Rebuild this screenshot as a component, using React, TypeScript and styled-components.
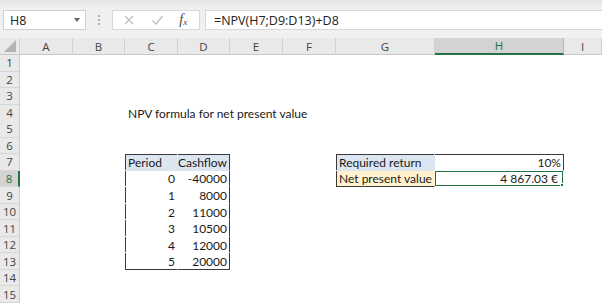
import React from 'react';
import styled, { createGlobalStyle, css } from 'styled-components';

const GlobalStyle = createGlobalStyle`
  html, body {
    margin: 0;
    padding: 0;
    background: #ffffff;
    overflow: hidden;
  }
`;

const COLS = ['A', 'B', 'C', 'D', 'E', 'F', 'G', 'H', 'I'];
const TEMPLATE = '20px 53px 52px 53px 52px 53px 53px 99px 129px 1fr';
const ROW_H = '16.54px';

type CellDef = {
  text?: string;
  align?: 'left' | 'right';
  bg?: string;
  top?: boolean;
  left?: boolean;
  right?: boolean;
  bottom?: boolean;
  selected?: boolean;
};

const cells: Record<string, CellDef> = {
  C4: { text: 'NPV formula for net present value' },
  C7: { text: 'Period', bg: '#dce6f1', top: true, left: true },
  D7: { text: 'Cashflow', align: 'right', bg: '#dce6f1', top: true, right: true },
  G7: { text: 'Required return', bg: '#dce6f1', top: true, left: true },
  H7: { text: '10%', align: 'right', top: true, right: true },
  G8: { text: 'Net present value', bg: '#fff2cc', bottom: true, left: true },
  H8: { text: '4 867.03 € ', align: 'right', selected: true },
};

const cashflow = [
  ['0', '-40000'],
  ['1', '8000'],
  ['2', '11000'],
  ['3', '10500'],
  ['4', '12000'],
  ['5', '20000'],
];
cashflow.forEach(([p, c], i) => {
  const r = 8 + i;
  const last = i === cashflow.length - 1;
  cells[`C${r}`] = { text: p, align: 'right', left: true, bottom: last };
  cells[`D${r}`] = { text: c, align: 'right', right: true, bottom: last };
});

const App = () => {
  const rows = Array.from({ length: 15 }, (_, i) => i + 1);
  return (
    <>
      <GlobalStyle />
      <Window>
        <Toolbar>
          <NameBox>
            <NameText>H8</NameText>
            <Caret />
          </NameBox>
          <Grip>
            <Dot />
            <Dot />
            <Dot />
          </Grip>
          <ActionBox>
            <ActionIcon>
              <svg width="12" height="12" viewBox="0 0 12 12">
                <path d="M2 2 L10 10 M10 2 L2 10" stroke="#bdbdbd" strokeWidth="1.2" fill="none" />
              </svg>
            </ActionIcon>
            <ActionIcon>
              <svg width="13" height="12" viewBox="0 0 13 12">
                <path d="M1.5 6.5 L5 10 L11.5 2" stroke="#bdbdbd" strokeWidth="1.2" fill="none" />
              </svg>
            </ActionIcon>
            <Fx>
              f<sub>x</sub>
            </Fx>
          </ActionBox>
          <FormulaBox>=NPV(H7;D9:D13)+D8</FormulaBox>
        </Toolbar>
        <Sheet>
          <HeaderRow>
            <Corner>
              <svg width="12" height="12" viewBox="0 0 12 12">
                <path d="M12 0 L12 12 L0 12 Z" fill="#b4b4b4" />
              </svg>
            </Corner>
            {COLS.map((c) => (
              <ColHeader key={c} $active={c === 'H'}>
                {c}
              </ColHeader>
            ))}
          </HeaderRow>
          {rows.map((r) => (
            <GridRow key={r}>
              <RowHeader $active={r === 8}>{r}</RowHeader>
              {COLS.map((c) => {
                const def = cells[`${c}${r}`] || {};
                return (
                  <Cell
                    key={c}
                    $align={def.align || 'left'}
                    $bg={def.bg}
                    $top={def.top}
                    $left={def.left}
                    $right={def.right}
                    $bottom={def.bottom}
                    $overflow={c === 'C' && r === 4}
                  >
                    {def.text}
                    {def.selected && (
                      <>
                        <Selection />
                        <Handle />
                      </>
                    )}
                  </Cell>
                );
              })}
            </GridRow>
          ))}
        </Sheet>
      </Window>
    </>
  );
};

export default App;

const Window = styled.div`
  width: 602px;
  height: 304px;
  display: flex;
  flex-direction: column;
  font-family: 'Open Sans', 'Noto Sans', sans-serif;
`;

const Toolbar = styled.div`
  height: 38px;
  box-sizing: border-box;
  padding: 10px 0 8px 3px;
  display: flex;
  align-items: stretch;
  background: linear-gradient(#e4e4e4 0px, #efefef 8px, #f1f1f1 100%);
`;

const NameBox = styled.div`
  width: 83px;
  box-sizing: border-box;
  background: #fff;
  border: 1px solid #d0d0d0;
  display: flex;
  align-items: center;
  justify-content: space-between;
  padding: 0 5px 0 6px;
`;

const NameText = styled.span`
  font-size: 12.5px;
  color: #222;
`;

const Caret = styled.span`
  width: 0;
  height: 0;
  border-left: 3.5px solid transparent;
  border-right: 3.5px solid transparent;
  border-top: 4px solid #666;
`;

const Grip = styled.div`
  width: 26px;
  display: flex;
  flex-direction: column;
  align-items: center;
  justify-content: center;
  gap: 2px;
`;

const Dot = styled.span`
  width: 2px;
  height: 2px;
  background: #b0b0b0;
`;

const ActionBox = styled.div`
  width: 88px;
  box-sizing: border-box;
  background: #fff;
  border: 1px solid #d8d8d8;
  display: flex;
  align-items: center;
  justify-content: space-around;
  padding: 0 4px 0 2px;
`;

const ActionIcon = styled.span`
  display: flex;
  align-items: center;
`;

const Fx = styled.span`
  font-family: 'Liberation Serif', serif;
  font-style: italic;
  font-size: 14px;
  color: #444;
  sub {
    font-size: 9px;
    vertical-align: -1px;
  }
`;

const FormulaBox = styled.div`
  flex: 1;
  margin-left: 5px;
  box-sizing: border-box;
  background: #fff;
  border: 1px solid #d8d8d8;
  border-right: none;
  display: flex;
  align-items: center;
  padding-left: 8px;
  font-size: 12.5px;
  color: #222;
`;

const Sheet = styled.div`
  flex: 1;
  display: flex;
  flex-direction: column;
`;

const HeaderRow = styled.div`
  display: grid;
  grid-template-columns: ${TEMPLATE};
  height: 17px;
  background: #e9e9e9;
`;

const Corner = styled.div`
  display: flex;
  align-items: flex-end;
  justify-content: flex-end;
  padding: 0 3px 2px 0;
  border-right: 1px solid #d0d0d0;
  border-bottom: 1px solid #c8c8c8;
`;

const ColHeader = styled.div<{ $active?: boolean }>`
  box-sizing: border-box;
  display: flex;
  align-items: center;
  justify-content: center;
  font-size: 11.5px;
  color: #444;
  border-right: 1px solid #d0d0d0;
  border-bottom: 1px solid #c8c8c8;
  ${(p) =>
    p.$active &&
    css`
      background: #d3d3d3;
      color: #217346;
      border-bottom: 2px solid #217346;
      border-right-color: #b8b8b8;
    `}
`;

const GridRow = styled.div`
  display: grid;
  grid-template-columns: ${TEMPLATE};
  height: ${ROW_H};
`;

const RowHeader = styled.div<{ $active?: boolean }>`
  box-sizing: border-box;
  display: flex;
  align-items: center;
  justify-content: center;
  font-size: 11.5px;
  color: #444;
  background: #e9e9e9;
  border-right: 1px solid #c8c8c8;
  border-bottom: 1px solid #d6d6d6;
  ${(p) =>
    p.$active &&
    css`
      background: #d3d3d3;
      color: #217346;
      border-right: 2px solid #217346;
    `}
`;

const Cell = styled.div<{
  $align: 'left' | 'right';
  $bg?: string;
  $top?: boolean;
  $left?: boolean;
  $right?: boolean;
  $bottom?: boolean;
  $overflow?: boolean;
}>`
  position: relative;
  box-sizing: border-box;
  display: flex;
  align-items: center;
  justify-content: ${(p) => (p.$align === 'right' ? 'flex-end' : 'flex-start')};
  padding: 1px 2px 0 3px;
  font-family: Lato, 'Open Sans', sans-serif;
  font-size: 12px;
  color: #1a1a1a;
  white-space: pre;
  overflow: ${(p) => (p.$overflow ? 'visible' : 'hidden')};
  background: ${(p) => p.$bg || '#fff'};
  border-right: 1px solid ${(p) => (p.$right ? '#3a3a3a' : 'transparent')};
  border-bottom: 1px solid ${(p) => (p.$bottom ? '#3a3a3a' : 'transparent')};
  box-shadow: ${(p) =>
    [p.$top && 'inset 0 1px 0 #3a3a3a', p.$left && 'inset 1px 0 0 #3a3a3a'].filter(Boolean).join(', ') ||
    'none'};
  z-index: ${(p) => (p.$overflow ? 1 : 0)};
`;

const Selection = styled.div`
  position: absolute;
  left: -1px;
  top: -1px;
  right: -1px;
  bottom: -1px;
  border: 2px solid #217346;
  pointer-events: none;
`;

const Handle = styled.div`
  position: absolute;
  right: -4px;
  bottom: -4px;
  width: 5px;
  height: 5px;
  background: #217346;
  border: 1px solid #fff;
  z-index: 2;
`;
